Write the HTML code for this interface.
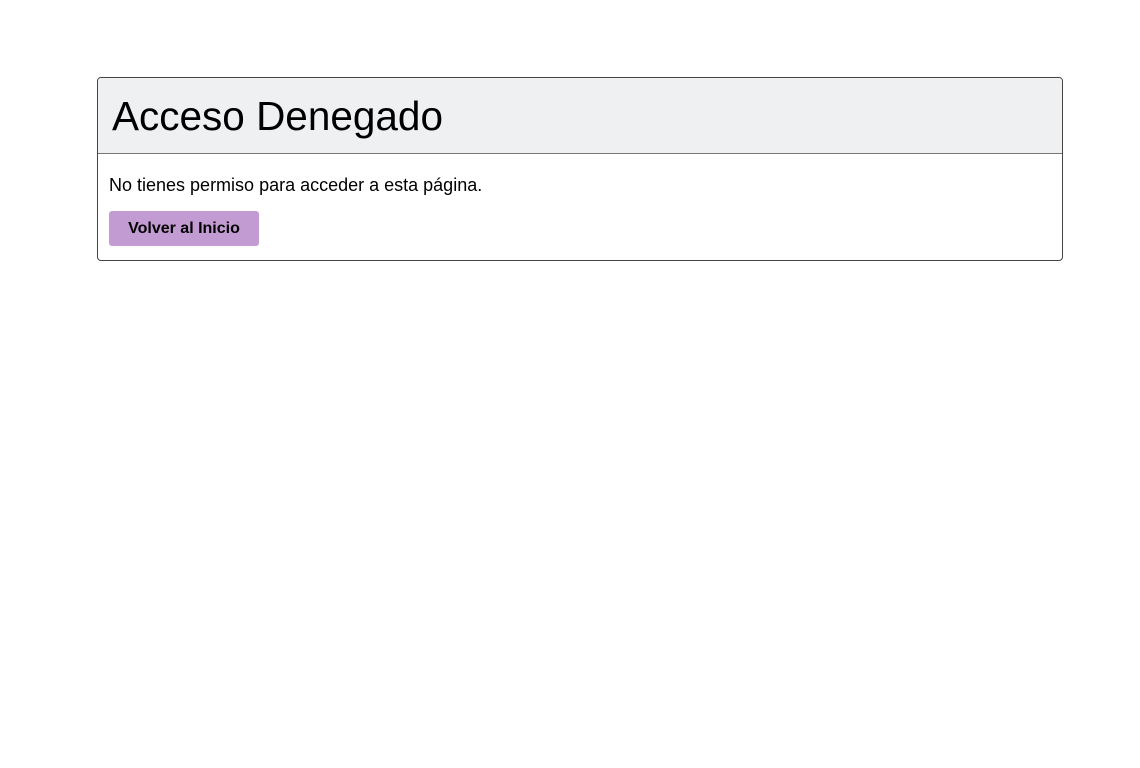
<!DOCTYPE html>
<html><head><meta charset="utf-8"><style>
html,body{margin:0;background:#fff;width:1140px;height:768px;overflow:hidden}
body{font-family:"Comic Sans MS","Liberation Sans",sans-serif;color:#000}
.card{position:absolute;left:97px;top:77px;width:964px;height:182px;border:1px solid #444;border-radius:4px;overflow:hidden}
.hd{height:75px;background:#eff0f2;border-bottom:1px solid #777;position:relative}
.hd h1{position:absolute;left:14px;top:13px;margin:0;font-size:40.5px;font-weight:normal;line-height:50px}
p{position:absolute;left:11px;top:94px;margin:0;font-size:18px;line-height:26px}
.btn{position:absolute;left:11px;top:133px;width:150px;height:35px;background:#c39bd3;border-radius:3px;font-size:16px;font-weight:bold;line-height:35px;text-align:center}
</style></head><body>
<div class="card">
<div class="hd"><h1>Acceso Denegado</h1></div>
<p>No tienes permiso para acceder a esta página.</p>
<div class="btn">Volver al Inicio</div>
</div>
</body></html>
